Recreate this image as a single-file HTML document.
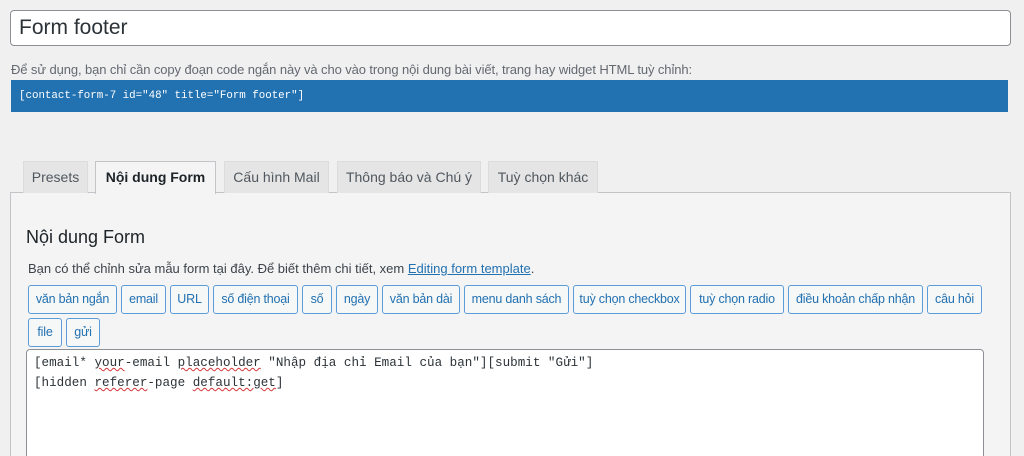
<!DOCTYPE html>
<html><head><meta charset="utf-8"><style>
*{box-sizing:border-box;margin:0;padding:0}
html,body{width:1024px;height:456px;overflow:hidden}
body{background:#f0f0f1;font-family:"Segoe UI","Liberation Sans","Noto Sans CJK SC",sans-serif;color:#1d2327;position:relative}
.a{position:absolute}
.title{left:10px;top:10px;width:1001px;height:36px;background:#fff;border:1px solid #8c8f94;border-radius:4px;font-size:21px;padding:3px 8px;line-height:28px;color:#2c3338}
.desc{left:11px;top:62px;font-size:13px;color:#646970;white-space:nowrap;letter-spacing:-0.1px}
.bar{left:11px;top:80px;width:997px;height:32px;background:#2271b1;color:#fff;font-family:"Liberation Mono",monospace;font-size:10.8px;line-height:32px;padding-left:8px}
.tab{top:161px;height:32px;background:#e5e5e5;border:1px solid #dcdcde;border-bottom:none;font-size:14px;color:#50575e;text-align:center;line-height:31px;white-space:nowrap}
.tab.on{background:#f4f4f4;border-color:#c3c4c7;color:#1d2327;font-weight:bold;height:33px;z-index:2}
.panel{left:10px;top:192px;width:1001px;height:270px;background:#f4f4f4;border:1px solid #c3c4c7}
.h{left:26px;top:227px;font-size:18px;color:#1d2327}
.p{left:28px;top:261px;font-size:13px;color:#3c434a;white-space:nowrap}
.p u{color:#2271b1}
.b{height:29px;border:1px solid #5b9dd9;border-radius:3px;background:#f6f7f7;color:#2271b1;font-size:12.5px;text-align:center;line-height:26px;white-space:nowrap;letter-spacing:-0.2px}
.ta{left:26px;top:349px;width:958px;height:120px;background:#fff;border:1px solid #8c8f94;border-radius:4px;font-family:"Liberation Mono",monospace;font-size:12.6px;line-height:20px;padding:3px 7px;color:#2c3338;white-space:pre}
.w{text-decoration:underline wavy #d63638;text-decoration-thickness:1px}
</style></head><body>
<div class="a title">Form footer</div>
<div class="a desc">Để sử dụng, bạn chỉ cần copy đoạn code ngắn này và cho vào trong nội dung bài viết, trang hay widget HTML tuỳ chỉnh:</div>
<div class="a bar">[contact-form-7 id="48" title="Form footer"]</div>
<div class="a panel"></div>
<div class="a tab" style="left:23px;width:65px">Presets</div>
<div class="a tab on" style="left:95px;width:121px">Nội dung Form</div>
<div class="a tab" style="left:224px;width:105px">Cấu hình Mail</div>
<div class="a tab" style="left:337px;width:144px">Thông báo và Chú ý</div>
<div class="a tab" style="left:488px;width:110px">Tuỳ chọn khác</div>
<div class="a h">Nội dung Form</div>
<div class="a p">Bạn có thể chỉnh sửa mẫu form tại đây. Để biết thêm chi tiết, xem <u>Editing form template</u>.</div>
<div class="a b" style="left:28px;top:285px;width:89px">văn bản ngắn</div>
<div class="a b" style="left:121px;top:285px;width:45px">email</div>
<div class="a b" style="left:170px;top:285px;width:39px">URL</div>
<div class="a b" style="left:213px;top:285px;width:85px">số điện thoại</div>
<div class="a b" style="left:302px;top:285px;width:30px">số</div>
<div class="a b" style="left:336px;top:285px;width:42px">ngày</div>
<div class="a b" style="left:382px;top:285px;width:78px">văn bản dài</div>
<div class="a b" style="left:464px;top:285px;width:105px">menu danh sách</div>
<div class="a b" style="left:573px;top:285px;width:113px">tuỳ chọn checkbox</div>
<div class="a b" style="left:690px;top:285px;width:94px">tuỳ chọn radio</div>
<div class="a b" style="left:788px;top:285px;width:135px">điều khoản chấp nhận</div>
<div class="a b" style="left:927px;top:285px;width:55px">câu hỏi</div>
<div class="a b" style="left:28px;top:318px;width:34px">file</div>
<div class="a b" style="left:66px;top:318px;width:34px">gửi</div>
<div class="a ta">[email* <span class="w">your</span>-email <span class="w">placeholder</span> "Nhập địa chỉ Email của bạn"][submit "Gửi"]
[hidden <span class="w">referer</span>-page <span class="w">default:get</span>]</div>
</body></html>
